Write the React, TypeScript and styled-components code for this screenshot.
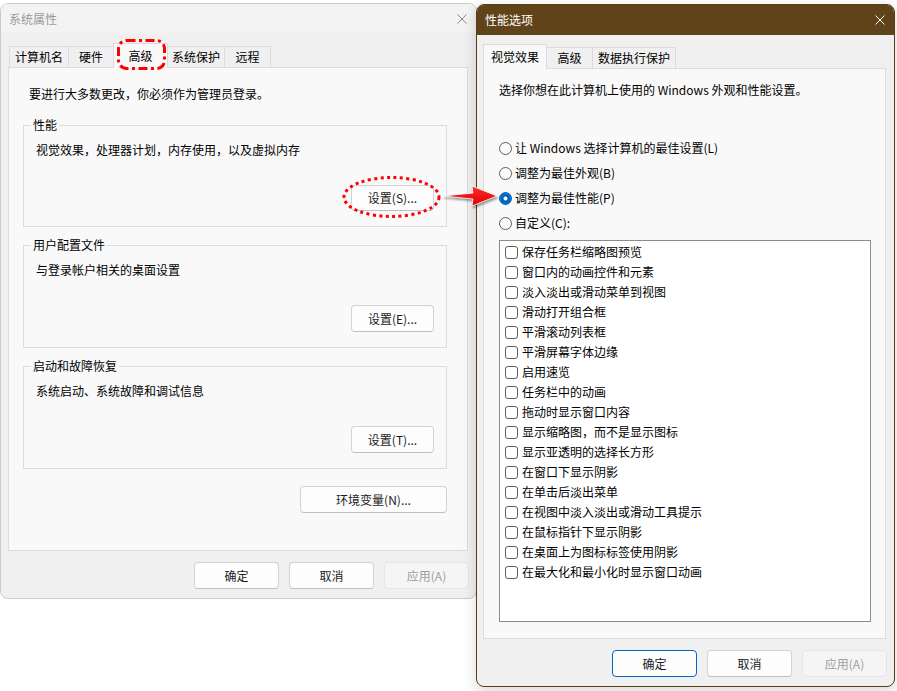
import React from "react";
import styled, { createGlobalStyle, css } from "styled-components";

const GlobalStyle = createGlobalStyle`
  html, body {
    margin: 0;
    padding: 0;
    background: #ffffff;
  }
  body {
    font-family: "Noto Sans CJK SC", "Noto Sans", "Liberation Sans", sans-serif;
    font-size: 12px;
    line-height: 16px;
    color: #000000;
  }
  * {
    box-sizing: border-box;
  }
`;

const Desktop = styled.div`
  position: relative;
  width: 897px;
  height: 691px;
  padding-top: 3px;
  display: flex;
  align-items: flex-start;
  overflow: hidden;
`;

const Window = styled.div<{ $active?: boolean; $width: number; $height: number }>`
  position: relative;
  flex-shrink: 0;
  display: flex;
  flex-direction: column;
  width: ${(p) => p.$width}px;
  height: ${(p) => p.$height}px;
  background: #f0f0f0;
  border: 1px solid #cbcbcb;
  border-radius: 8px;
  overflow: hidden;
  ${(p) =>
    p.$active &&
    css`
      z-index: 1;
      margin-left: -1px;
      margin-top: 1px;
      border-color: #5a3f16;
      box-shadow: 0 4px 14px rgba(0, 0, 0, 0.16);
    `}
`;

const TitleBar = styled.div<{ $active?: boolean }>`
  flex-shrink: 0;
  height: ${(p) => (p.$active ? 30 : 29)}px;
  display: flex;
  align-items: center;
  justify-content: space-between;
  padding: 0 9px 0 8px;
  background: ${(p) => (p.$active ? "#604318" : "#f3f3f3")};
  color: ${(p) => (p.$active ? "#ffffff" : "#9a9a9a")};
`;

const CloseIcon = styled.svg`
  width: 10px;
  height: 10px;
  display: block;
`;

const Body = styled.div<{ $top: number; $left: number }>`
  flex: 1;
  display: flex;
  flex-direction: column;
  padding: ${(p) => p.$top}px 8px 0 ${(p) => p.$left}px;
  min-height: 0;
`;

const TabRow = styled.div<{ $indent: number }>`
  position: relative;
  z-index: 2;
  height: 24px;
  display: flex;
  align-items: flex-end;
  padding-left: ${(p) => p.$indent}px;
`;

const Tab = styled.div<{ $w: number; $selected?: boolean }>`
  position: relative;
  width: ${(p) => p.$w}px;
  height: ${(p) => (p.$selected ? 25 : 21)}px;
  margin-right: -1px;
  margin-bottom: ${(p) => (p.$selected ? -1 : 0)}px;
  display: flex;
  align-items: center;
  justify-content: center;
  padding-bottom: ${(p) => (p.$selected ? 1 : 0)}px;
  border: 1px solid #dcdcdc;
  border-bottom: none;
  background: ${(p) => (p.$selected ? "#f9f9f9" : "#f0f0f0")};
  z-index: ${(p) => (p.$selected ? 1 : 0)};
  white-space: nowrap;
`;

const TabMark = styled.svg`
  position: absolute;
  left: 3px;
  top: -5px;
  width: 49px;
  height: 31px;
  overflow: visible;
  pointer-events: none;
`;

const Panel = styled.div<{ $pad: string }>`
  flex: 1;
  position: relative;
  z-index: 1;
  display: flex;
  flex-direction: column;
  padding: ${(p) => p.$pad};
  background: #f9f9f9;
  border: 1px solid #dcdcdc;
  min-height: 0;
`;

const Notice = styled.div<{ $indent: number }>`
  margin-left: ${(p) => p.$indent}px;
  white-space: nowrap;
`;

const Group = styled.fieldset`
  margin: 10px 0 0;
  padding: 9px 12px 15px;
  border: 1px solid #dcdcdc;
  min-width: 0;
  display: flex;
  flex-direction: column;

  &:first-of-type {
    margin-top: 15px;
  }

  legend {
    margin-left: -5px;
    padding: 0 2px;
    font-size: 12px;
    line-height: 16px;
  }
`;

const GroupText = styled.div`
  white-space: nowrap;
`;

const GroupActions = styled.div`
  margin-top: 27px;
  display: flex;
  justify-content: flex-end;
`;

const Button = styled.button<{ $w: number; $h?: number; $default?: boolean }>`
  width: ${(p) => p.$w}px;
  height: ${(p) => p.$h ?? 27}px;
  padding: 0;
  font: inherit;
  color: #1b1b1b;
  background: #fdfdfd;
  border: 1px solid #d3d3d3;
  border-bottom-color: #bfbfbf;
  border-radius: 4px;
  white-space: nowrap;
  ${(p) =>
    p.$default &&
    css`
      border-color: #0067c0;
      box-shadow: inset 0 0 0 1px #ffffff;
    `}

  &:disabled {
    background: #f5f5f5;
    border-color: #e5e5e5;
    color: #9f9f9f;
  }
`;

const EnvButton = styled(Button)`
  align-self: flex-end;
  margin-top: 17px;
`;

const Marked = styled.div`
  position: relative;
  display: inline-flex;
`;

const MarkEllipse = styled.svg`
  position: absolute;
  left: -9px;
  top: -9px;
  width: 99px;
  height: 42px;
  overflow: visible;
  pointer-events: none;
`;

const ButtonRow = styled.div`
  flex-shrink: 0;
  display: flex;
  justify-content: flex-end;
  gap: 10px;
  padding: 11px 7px 9px 0;
`;

const RadioList = styled.div`
  margin-top: 40px;
  display: flex;
  flex-direction: column;
  gap: 5px;
`;

const RadioRow = styled.label`
  height: 20px;
  display: flex;
  align-items: center;
  gap: 3px;
  white-space: nowrap;
`;

const RadioDot = styled.span<{ $checked?: boolean }>`
  width: 13px;
  height: 13px;
  border-radius: 50%;
  flex-shrink: 0;
  border: 1px solid #5c5c5c;
  background: #fbfbfb;
  ${(p) =>
    p.$checked &&
    css`
      border-color: #0067c0;
      background: #0067c0;
      box-shadow: inset 0 0 0 3.5px #0067c0, inset 0 0 0 10px #ffffff;
    `}
`;

const ListBox = styled.div`
  margin-top: 7px;
  width: 372px;
  height: 382px;
  padding-top: 1px;
  background: #ffffff;
  border: 1px solid #8c8c8c;
`;

const CheckRow = styled.div`
  height: 20px;
  display: flex;
  align-items: center;
  gap: 4px;
  padding-left: 5px;
  white-space: nowrap;
`;

const CheckBox = styled.span`
  width: 13px;
  height: 13px;
  flex-shrink: 0;
  border: 1px solid #5f5f5f;
  border-radius: 3px;
  background: #ffffff;
`;

const Arrow = styled.svg`
  position: absolute;
  z-index: 3;
  left: 436px;
  top: 180px;
  width: 70px;
  height: 40px;
  filter: drop-shadow(1.5px 2px 1.2px rgba(0, 0, 0, 0.4));
  pointer-events: none;
`;

const Close = ({ color }: { color: string }) => (
  <CloseIcon viewBox="0 0 10 10">
    <path d="M0.5 0.5 L9.5 9.5 M9.5 0.5 L0.5 9.5" stroke={color} strokeWidth="1" fill="none" />
  </CloseIcon>
);

const leftTabs = [
  { label: "计算机名", w: 60 },
  { label: "硬件", w: 46 },
  { label: "高级", w: 55, selected: true },
  { label: "系统保护", w: 58 },
  { label: "远程", w: 47 },
];

const rightTabs = [
  { label: "视觉效果", w: 64, selected: true },
  { label: "高级", w: 47 },
  { label: "数据执行保护", w: 84 },
];

const groups = [
  { title: "性能", text: "视觉效果，处理器计划，内存使用，以及虚拟内存", button: "设置(S)...", marked: true },
  { title: "用户配置文件", text: "与登录帐户相关的桌面设置", button: "设置(E)..." },
  { title: "启动和故障恢复", text: "系统启动、系统故障和调试信息", button: "设置(T)..." },
];

const radios = [
  { label: "让 Windows 选择计算机的最佳设置(L)" },
  { label: "调整为最佳外观(B)" },
  { label: "调整为最佳性能(P)", checked: true },
  { label: "自定义(C):" },
];

const effects = [
  "保存任务栏缩略图预览",
  "窗口内的动画控件和元素",
  "淡入淡出或滑动菜单到视图",
  "滑动打开组合框",
  "平滑滚动列表框",
  "平滑屏幕字体边缘",
  "启用速览",
  "任务栏中的动画",
  "拖动时显示窗口内容",
  "显示缩略图，而不是显示图标",
  "显示亚透明的选择长方形",
  "在窗口下显示阴影",
  "在单击后淡出菜单",
  "在视图中淡入淡出或滑动工具提示",
  "在鼠标指针下显示阴影",
  "在桌面上为图标标签使用阴影",
  "在最大化和最小化时显示窗口动画",
];

const DialogButtons = ({ active }: { active?: boolean }) => (
  <ButtonRow>
    <Button $w={85} $default={active}>确定</Button>
    <Button $w={85}>取消</Button>
    <Button $w={85} disabled>应用(A)</Button>
  </ButtonRow>
);

const SystemProperties = () => (
  <Window $width={477} $height={596}>
    <TitleBar>
      <span>系统属性</span>
      <Close color="#8a8a8a" />
    </TitleBar>
    <Body $top={10} $left={7}>
      <TabRow $indent={1}>
        {leftTabs.map((t) => (
          <Tab key={t.label} $w={t.w} $selected={t.selected}>
            {t.label}
            {t.selected && (
              <TabMark viewBox="0 0 49 31">
                <rect
                  x="1.5"
                  y="1.5"
                  width="46"
                  height="28"
                  rx="8"
                  fill="none"
                  stroke="#ff0000"
                  strokeWidth="3"
                  strokeDasharray="9 3.5 3 3.5"
                />
              </TabMark>
            )}
          </Tab>
        ))}
      </TabRow>
      <Panel $pad="18px 20px 0 14px">
        <Notice $indent={6}>要进行大多数更改，你必须作为管理员登录。</Notice>
        {groups.map((g) => (
          <Group key={g.title}>
            <legend>{g.title}</legend>
            <GroupText>{g.text}</GroupText>
            <GroupActions>
              {g.marked ? (
                <Marked>
                  <Button $w={83} $h={26}>{g.button}</Button>
                  <MarkEllipse viewBox="0 0 99 42">
                    <ellipse
                      cx="49.5"
                      cy="21"
                      rx="47.5"
                      ry="19.5"
                      fill="none"
                      stroke="#ff0000"
                      strokeWidth="3"
                      strokeDasharray="3 3.4"
                    />
                  </MarkEllipse>
                </Marked>
              ) : (
                <Button $w={83}>{g.button}</Button>
              )}
            </GroupActions>
          </Group>
        ))}
        <EnvButton $w={147}>环境变量(N)...</EnvButton>
      </Panel>
    </Body>
    <DialogButtons />
  </Window>
);

const PerformanceOptions = () => (
  <Window $active $width={419} $height={683}>
    <TitleBar $active>
      <span>性能选项</span>
      <Close color="#ffffff" />
    </TitleBar>
    <Body $top={9} $left={6}>
      <TabRow $indent={0}>
        {rightTabs.map((t) => (
          <Tab key={t.label} $w={t.w} $selected={t.selected}>
            {t.label}
          </Tab>
        ))}
      </TabRow>
      <Panel $pad="13px 0 0 15px">
        <Notice $indent={0}>选择你想在此计算机上使用的 Windows 外观和性能设置。</Notice>
        <RadioList>
          {radios.map((r) => (
            <RadioRow key={r.label}>
              <RadioDot $checked={r.checked} />
              {r.label}
            </RadioRow>
          ))}
        </RadioList>
        <ListBox>
          {effects.map((e) => (
            <CheckRow key={e}>
              <CheckBox />
              {e}
            </CheckRow>
          ))}
        </ListBox>
      </Panel>
    </Body>
    <DialogButtons active />
  </Window>
);

export default function App() {
  return (
    <>
      <GlobalStyle />
      <Desktop>
        <SystemProperties />
        <PerformanceOptions />
        <Arrow viewBox="0 0 70 40">
          <defs>
            <linearGradient id="arrowFill" x1="0" y1="0" x2="0" y2="1">
              <stop offset="0" stopColor="#ff2a2a" />
              <stop offset="1" stopColor="#e00000" />
            </linearGradient>
          </defs>
          <polygon
            points="7,16 37,13 36,6 61,16 36,26 37,19"
            fill="url(#arrowFill)"
            stroke="#ffffff"
            strokeWidth="0.8"
            strokeLinejoin="round"
          />
        </Arrow>
      </Desktop>
    </>
  );
}
